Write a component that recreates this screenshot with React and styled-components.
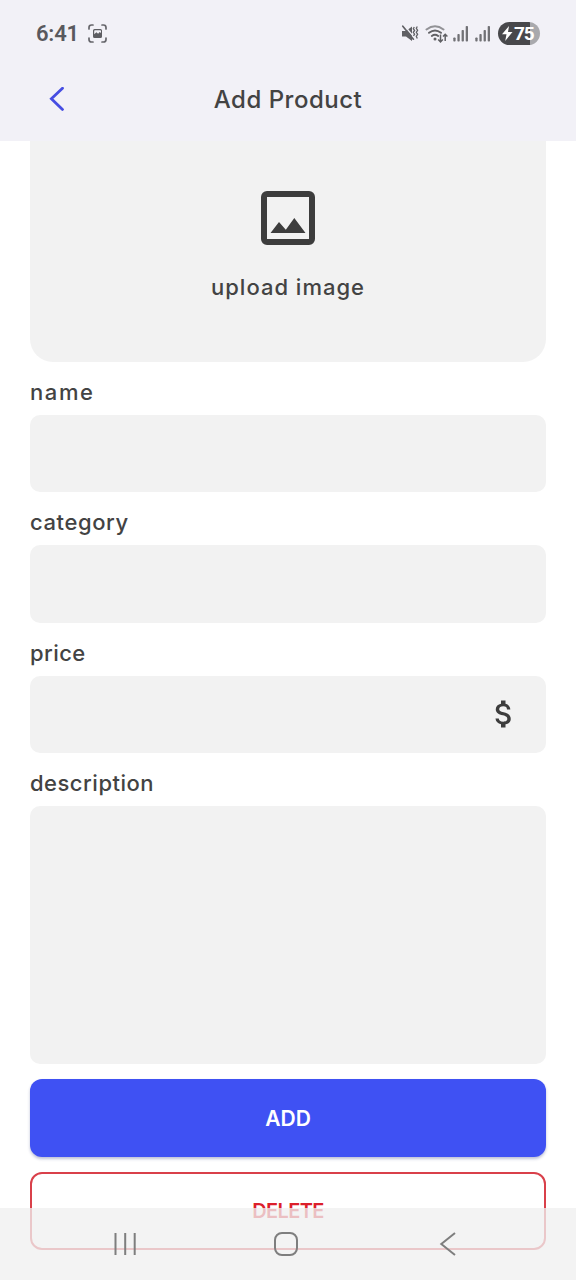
import React from "react";
import styled, { createGlobalStyle } from "styled-components";

const GlobalStyle = createGlobalStyle`
  * { box-sizing: border-box; }
  body { margin: 0; background: #fff; color: #434343; font-family: Inter, "Noto Sans", sans-serif; }
  svg { display: block; flex: none; }
`;

const Screen = styled.div`
  position: relative;
  width: 576px;
  height: 1280px;
  overflow: hidden;
  background: #fff;
`;

const Header = styled.header`
  height: 141px;
  background: #f2f1f7;
`;

const StatusBar = styled.div`
  height: 67px;
  padding: 0 36px;
  display: flex;
  align-items: center;
  justify-content: space-between;
`;

const StatusGroup = styled.div`
  display: flex;
  align-items: center;
  gap: ${(p) => p.$gap}px;
`;

const Clock = styled.span`
  font: 600 22px/24px Roboto, sans-serif;
  letter-spacing: -0.2px;
  color: #59595e;
`;

const Battery = styled.div`
  width: 42px;
  height: 23px;
  margin-left: 2px;
  padding-left: 4px;
  border-radius: 12px;
  display: flex;
  align-items: center;
  gap: 1px;
  color: #fff;
  font: 700 19px/23px Roboto, sans-serif;
  letter-spacing: -1.2px;
  background: linear-gradient(90deg, #48484b 32px, #a9a9ad 32px);
`;

const TitleBar = styled.div`
  height: 66px;
  padding: 0 48px;
  display: grid;
  grid-template-columns: 24px 1fr 24px;
  align-items: center;
`;

const Title = styled.h1`
  margin: 0;
  text-align: center;
  font-size: 24px;
  line-height: 36px;
  font-weight: 500;
  letter-spacing: 0.5px;
`;

const Form = styled.main`
  padding: 0 30px;
  display: flex;
  flex-direction: column;
`;

const Upload = styled.div`
  height: 220.5px;
  padding-top: 50px;
  display: flex;
  flex-direction: column;
  align-items: center;
  gap: 26px;
  border-radius: 0 0 23px 23px;
  background: #f2f2f2;
`;

const Caption = styled.span`
  font-size: 22px;
  line-height: 32px;
  font-weight: 500;
  letter-spacing: ${(p) => p.$spacing}px;
`;

const Label = styled.label`
  height: 53px;
  padding-top: 14px;
  font-size: 22px;
  line-height: 32px;
  font-weight: 500;
  letter-spacing: ${(p) => p.$spacing}px;
`;

const Field = styled.div`
  height: ${(p) => p.$height || 77.5}px;
  padding-right: 24px;
  display: flex;
  align-items: center;
  justify-content: flex-end;
  border-radius: 10px;
  background: #f2f2f2;
`;

const Button = styled.button`
  height: 78px;
  margin: 15.5px 0 0;
  padding: ${(p) => (p.$outlined ? 0 : 2)}px 0 0;
  border: ${(p) => (p.$outlined ? "2px solid #d9404a" : "0")};
  border-radius: 12px;
  background: ${(p) => (p.$outlined ? "#fff" : "#3f51f3")};
  color: ${(p) => (p.$outlined ? "#dc1f2b" : "#fff")};
  box-shadow: ${(p) => (p.$outlined ? "none" : "0 2px 3px rgba(40, 50, 120, 0.3)")};
  font: 600 ${(p) => (p.$outlined ? 20 : 21)}px/30px Inter, sans-serif;
  letter-spacing: ${(p) => p.$spacing}px;

  & + & { margin-top: 15px; }
`;

const NavigationBar = styled.nav`
  position: absolute;
  left: 0;
  right: 0;
  bottom: 0;
  height: 72px;
  padding: 0 119px 0 113px;
  display: flex;
  align-items: center;
  justify-content: space-between;
  background: rgba(240, 240, 240, 0.77);
`;

const HomeButton = styled.div`
  margin-right: 4px;
`;

const fields = [
  { name: "name", spacing: 1.6 },
  { name: "category", spacing: 0.6 },
  { name: "price", spacing: 0.4 },
  { name: "description", spacing: 0.5, height: 257.5 },
];

function CaptureIcon() {
  return (
    <svg width="19" height="19" viewBox="0 0 19 19" fill="none">
      <path d="M1 5V3.5Q1 1 3.5 1H5M14 1h1.5Q18 1 18 3.5V5M18 14v1.5Q18 18 15.5 18H14M5 18H3.5Q1 18 1 15.5V14" stroke="#66666b" strokeWidth="1.7" strokeLinecap="round" />
      <path fillRule="evenodd" fill="#5d5d62" d="M6.5 5h6Q14 5 14 6.5v6q0 1.5-1.5 1.5h-6Q5 14 5 12.5v-6Q5 5 6.5 5ZM6.2 10.2l2.2-2 1.7 1.5 1.6-1.8 1.3 1.2V7q0-.8-.8-.8H7q-.8 0-.8.8Z" />
    </svg>
  );
}

function MuteIcon() {
  return (
    <svg width="18" height="19" viewBox="0 0 18 19" fill="none">
      <path d="M1 7h4L11 2.5v14.5L5 12.5H1Z" fill="#606064" />
      <path d="M3.2 1.5l11 13" stroke="#f2f1f7" strokeWidth="1.3" />
      <path d="M1.8 2.2l10.6 13" stroke="#606064" strokeWidth="1.7" strokeLinecap="round" />
      <path d="M13.3 3l-1 1.7 1.3 1.8-1.3 1.8 1.3 1.9-1.1 1.7M16.3 2.5l-1 1.8 1.3 2-1.3 2 1.3 2-1.3 2 1 2.3" stroke="#606064" strokeWidth="1.3" />
    </svg>
  );
}

function WifiIcon() {
  return (
    <svg width="23" height="21" viewBox="0 0 23 21" fill="none">
      <path d="M1.5 6.5Q10 0 18.5 6.5" stroke="#929296" strokeWidth="2" strokeLinecap="round" />
      <path d="M4 9.8Q10 5.2 16 9.8M6.8 12.9Q10 10.5 13.2 12.9" stroke="#606064" strokeWidth="1.9" strokeLinecap="round" />
      <circle cx="10" cy="16" r="1.5" fill="#606064" />
      <path d="M15.5 11.5V19m-2.3-2.4 2.3 2.4 2.3-2.4M20.2 18v-6.7m-2.2 2.3 2.2-2.3 2.2 2.3" stroke="#606064" strokeWidth="1.5" />
    </svg>
  );
}

function SignalIcon() {
  return (
    <svg width="16" height="17" viewBox="0 0 16 17" fill="#717175">
      <rect x="0.3" y="12.5" width="2.3" height="4" rx=".8" />
      <rect x="4.4" y="9" width="2.3" height="7.5" rx=".8" />
      <rect x="8.6" y="5" width="2.3" height="11.5" rx=".8" />
      <rect x="12.7" y="1" width="2.3" height="15.5" rx=".8" />
    </svg>
  );
}

function BackIcon() {
  return (
    <svg width="18" height="26" viewBox="0 0 18 26" fill="none">
      <path d="M14.5 1.2 3.4 11.8l11.1 10.6" stroke="#464de2" strokeWidth="2.8" strokeLinecap="round" />
    </svg>
  );
}

function ImageIcon() {
  return (
    <svg width="54" height="54" viewBox="0 0 54 54" fill="none">
      <rect x="3" y="3" width="48" height="48" rx="3" stroke="#3d3d3d" strokeWidth="6" />
      <path d="M9.5 42 18 31l6.8 7.7L33.3 27 44.5 42Z" fill="#3d3d3d" />
    </svg>
  );
}

function DollarIcon() {
  return (
    <svg width="36" height="36" viewBox="0 0 24 24" fill="#3d3d3d">
      <path d="M11.8 10.9c-2.27-.59-3-1.2-3-2.15 0-1.09 1.01-1.85 2.7-1.85 1.78 0 2.44.85 2.5 2.1h2.21c-.07-1.72-1.12-3.3-3.21-3.81V3h-3v2.16c-1.94.42-3.5 1.68-3.5 3.61 0 2.31 1.91 3.46 4.7 4.13 2.5.6 3 1.48 3 2.41 0 .69-.49 1.79-2.7 1.79-2.06 0-2.87-.92-2.98-2.1h-2.2c.12 2.19 1.76 3.42 3.68 3.83V21h3v-2.15c1.95-.37 3.5-1.5 3.5-3.55 0-2.84-2.43-3.81-4.7-4.4z" />
    </svg>
  );
}

export default function App() {
  return (
    <>
      <GlobalStyle />
      <Screen>
        <Header>
          <StatusBar>
            <StatusGroup $gap={9}>
              <Clock>6:41</Clock>
              <CaptureIcon />
            </StatusGroup>
            <StatusGroup $gap={5.5}>
              <MuteIcon />
              <WifiIcon />
              <SignalIcon />
              <SignalIcon />
              <Battery>
                <svg width="11" height="15" viewBox="0 0 11 15" fill="#fff">
                  <path d="M7 0 0 8.2h4.5L3.2 15 10.5 6H6Z" />
                </svg>
                75
              </Battery>
            </StatusGroup>
          </StatusBar>
          <TitleBar>
            <BackIcon />
            <Title>Add Product</Title>
          </TitleBar>
        </Header>
        <Form>
          <Upload>
            <ImageIcon />
            <Caption $spacing={1}>upload image</Caption>
          </Upload>
          {fields.map((f) => (
            <React.Fragment key={f.name}>
              <Label $spacing={f.spacing}>{f.name}</Label>
              <Field $height={f.height}>{f.name === "price" && <DollarIcon />}</Field>
            </React.Fragment>
          ))}
          <Button $spacing={0}>ADD</Button>
          <Button $outlined $spacing={-0.65}>DELETE</Button>
        </Form>
        <NavigationBar>
          <svg width="24" height="26" viewBox="0 0 24 26" stroke="#7e7e7e" strokeWidth="2">
            <path d="M2.5 2v22M12.2 2v22M21.7 2v22" />
          </svg>
          <HomeButton>
            <svg width="26" height="26" viewBox="0 0 26 26" fill="none" stroke="#7e7e7e" strokeWidth="2">
              <rect x="2" y="2" width="22" height="22" rx="7" />
            </svg>
          </HomeButton>
          <svg width="18" height="26" viewBox="0 0 18 26" fill="none" stroke="#7e7e7e" strokeWidth="2">
            <path d="M16 2 2.3 13 16 24" />
          </svg>
        </NavigationBar>
      </Screen>
    </>
  );
}
